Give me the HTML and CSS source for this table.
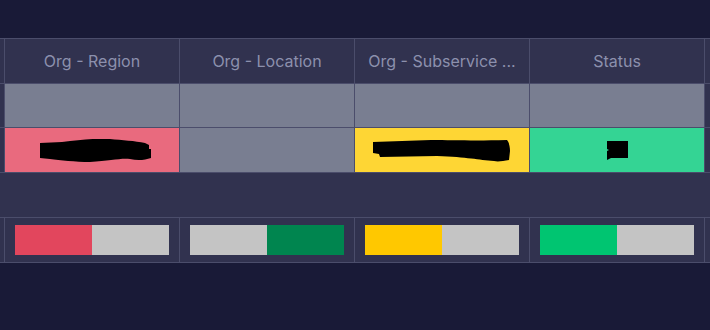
FILE: index.html
```html
<!DOCTYPE html>
<html lang="en">
<head>
<meta charset="utf-8">
<title>Org status</title>
<link rel="stylesheet" href="styles.css">
</head>
<body>
<div class="grid">
  <!-- header -->
  <div class="cell edge"></div>
  <div class="cell head">Org - Region</div>
  <div class="cell head">Org - Location</div>
  <div class="cell head">Org - Subservice ...</div>
  <div class="cell head">Status</div>
  <div class="cell edge"></div>

  <!-- blank row -->
  <div class="cell edge"></div>
  <div class="cell muted"></div>
  <div class="cell muted"></div>
  <div class="cell muted"></div>
  <div class="cell muted"></div>
  <div class="cell edge"></div>

  <!-- status row (values redacted) -->
  <div class="cell edge"></div>
  <div class="cell pink">
    <svg class="redact redact-a" width="112" height="23" viewBox="0 0 112 23" aria-hidden="true">
      <path d="M0 4 L22 3 C40 1 55 -1 70 0 C82 1 95 2 105 4 L109 6 L109 10 L111 10 L111 19 C105 21 98 22 90 20 C80 19 70 22 50 23 C35 23 20 21 10 20 L0 19 Z"/>
    </svg>
  </div>
  <div class="cell muted"></div>
  <div class="cell yellow">
    <svg class="redact" width="138" height="23" viewBox="0 0 138 23" aria-hidden="true">
      <path d="M0 3 L58 1 C80 1 100 2 134 1 C136 3 137 8 137 12 L136 21 C130 22 125 23 121 22 C105 21 95 18 64 17 L7 18 L6 15 L0 14 Z"/>
    </svg>
  </div>
  <div class="cell green">
    <svg class="redact" width="21" height="19" viewBox="0 0 21 19" aria-hidden="true">
      <path d="M0 0 L21 0 L21 17 L4 17 L0 19 L0 10 L2 9 L0 8 Z"/>
    </svg>
  </div>
  <div class="cell edge"></div>

  <!-- group spacer -->
  <div class="cell spacer"></div>

  <!-- split bars -->
  <div class="cell edge"></div>
  <div class="cell barcell"><div class="bar"><span class="seg red"></span><span class="seg grey"></span></div></div>
  <div class="cell barcell"><div class="bar"><span class="seg grey"></span><span class="seg darkgreen"></span></div></div>
  <div class="cell barcell"><div class="bar"><span class="seg amber"></span><span class="seg grey"></span></div></div>
  <div class="cell barcell"><div class="bar"><span class="seg lime"></span><span class="seg grey"></span></div></div>
  <div class="cell edge"></div>
</div>
</body>
</html>
```

FILE: styles.css
```css
html, body {
  margin: 0;
  padding: 0;
  background: #191a37;
  height: 100%;
}

body {
  font-family: Inter, "Liberation Sans", sans-serif;
}

.grid {
  margin-top: 38px;
  display: grid;
  grid-template-columns: 4px repeat(4, 174px) 5px;
  grid-template-rows: 44px 43px 44px 44px 44px;
  gap: 1px;
  background: #4b4d6b;
  border-top: 1px solid #4b4d6b;
  border-bottom: 1px solid #4b4d6b;
}

.cell {
  background: #31324f;
  display: flex;
  align-items: center;
  justify-content: center;
  min-width: 0;
}

.head {
  color: #8c90ad;
  font-size: 16px;
  white-space: nowrap;
  overflow: hidden;
}

.muted { background: #797e91; }
.pink { background: #e96a7e; }
.yellow { background: #fed634; }
.green { background: #34d494; }

.redact { display: block; fill: #000; }
.redact-a { margin-left: 8px; }

.spacer { grid-column: 1 / -1; }

.barcell {
  padding: 0 10px;
}

.bar {
  display: flex;
  width: 100%;
  height: 30px;
}

.seg { flex: 1; }
.red { background: #e2465d; }
.grey { background: #c4c4c4; }
.darkgreen { background: #00854f; }
.amber { background: #ffc800; }
.lime { background: #00c571; }
```
